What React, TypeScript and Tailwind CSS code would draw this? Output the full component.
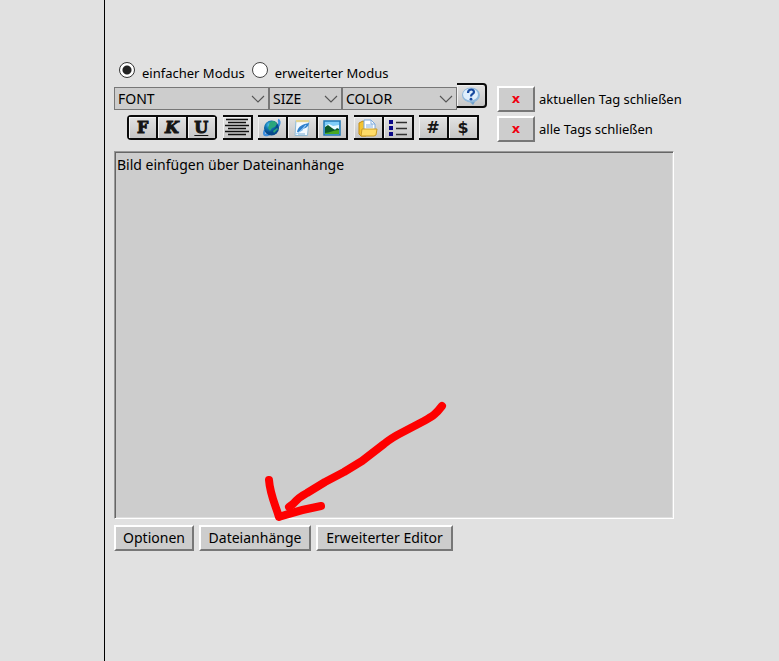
import type { ReactNode } from "react";

const FONT = "font-['Noto_Sans',sans-serif]";

function TagSelect({ label, className }: { label: string; className: string }) {
  return (
    <div className={`relative ${className}`}>
      <select
        aria-label={label}
        className="block h-[23px] w-full appearance-none border border-[#777] bg-[#cdcdcd] pl-[3px] text-sm leading-5 text-black"
      >
        <option>{label}</option>
      </select>
      <svg
        viewBox="0 0 14 8"
        className="pointer-events-none absolute top-2 right-1 h-2 w-3.5"
        fill="none"
        stroke="#555"
        strokeWidth="1.1"
      >
        <path d="M1 1l6 6 6-6" />
      </svg>
    </div>
  );
}

function IconGroup({ children, className = "" }: { children: ReactNode; className?: string }) {
  return <div className={`flex h-[25px] border-y-2 border-[#0a0a0a] ${className}`}>{children}</div>;
}

function IconButton({ title, children, className = "" }: { title: string; children: ReactNode; className?: string }) {
  return (
    <button
      type="button"
      title={title}
      aria-label={title}
      className={`flex w-[30px] items-center justify-center border-r-2 border-[#0a0a0a] bg-linear-to-b from-[#e2e2e2] to-[#c6c6c6] leading-5 font-bold text-[#151515] inset-shadow-[1px_1px_0_#f2f2f2] ${className}`}
    >
      {children}
    </button>
  );
}

function CloseTag({ label }: { label: string }) {
  return (
    <label className="flex h-[26px] items-center gap-1 text-[13px] leading-5">
      <button
        type="button"
        className="h-[26px] w-[38px] border-2 border-t-white border-r-[#777] border-b-[#777] border-l-white bg-[#cdcdcd] font-['DejaVu_Sans',sans-serif] text-[13px] leading-5 font-bold text-[#f00010]"
      >
        x
      </button>
      <span>{label}</span>
    </label>
  );
}

function FooterButton({ label, className }: { label: string; className: string }) {
  return (
    <button
      type="button"
      className={`h-[26px] border-2 border-t-white border-r-[#777] border-b-[#777] border-l-white bg-[#cdcdcd] text-sm leading-5 whitespace-nowrap ${className}`}
    >
      {label}
    </button>
  );
}

function HelpIcon() {
  return (
    <svg viewBox="0 0 20 20" className="h-5 w-5">
      <path d="M7 14h8l-3 5z" fill="#6d9fca" />
      <ellipse cx="10" cy="9" rx="9" ry="7.5" fill="#8fb8dc" />
      <ellipse cx="9.5" cy="8.5" rx="7.5" ry="6" fill="#e0effc" />
      <path d="M7 7c0-4.5 6-4.5 6-1 0 2-3 2-3 4.5" fill="none" stroke="#174aa0" strokeWidth="2.2" />
      <circle cx="10" cy="13.2" r="1.4" fill="#174aa0" />
    </svg>
  );
}

function AlignIcon() {
  return (
    <svg viewBox="0 0 24 19" className="h-[19px] w-6" stroke="#111" strokeWidth="1.5">
      <path d="M1 1.5h22M3 4.5h18M0 7.5h24M3 10.5h18M0 13.5h24M3 16.5h18" />
    </svg>
  );
}

function GlobeIcon() {
  return (
    <svg viewBox="0 0 20 20" className="h-5 w-5">
      <defs>
        <radialGradient id="globe" cx="35%" cy="30%">
          <stop offset="0" stopColor="#58c8ee" />
          <stop offset="0.5" stopColor="#147ab8" />
          <stop offset="1" stopColor="#064a8c" />
        </radialGradient>
      </defs>
      <path d="M3 12c-3 7 2 6 8 2s8-11 5-12" fill="none" stroke="#3d8fe0" strokeWidth="2.4" />
      <circle cx="9.5" cy="10" r="7.5" fill="url(#globe)" />
      <path d="M8 4c3-2 6-1 7 2l-2 3-3 1-2 3-2-3zM11 13l4-3 1 1-4 4z" fill="#2aa67c" />
    </svg>
  );
}

function EditIcon() {
  return (
    <svg viewBox="0 0 20 20" className="h-5 w-5">
      <path d="M4 2.5h13l-1.5 15H3z" fill="#f4faff" stroke="#8ebad5" />
      <path d="M4 2h13v2.2H4z" fill="#e3d492" />
      <path d="M5 14c1-6 6-8 12-9-1 5-4 5-6 6 0 1-2 3-6 3z" fill="#2f80cc" />
      <path d="M4 16c3-1 6-4 10-9" fill="none" stroke="#9fd0f6" strokeWidth="1.2" />
      <path d="M6 16h7" stroke="#75a8d2" />
    </svg>
  );
}

function ImageIcon() {
  return (
    <svg viewBox="0 0 18 16" className="h-4 w-[18px]">
      <path d="M1 1h16v14H1z" fill="#7fcdf8" stroke="#2379b5" strokeWidth="1.5" />
      <path d="M2 6l4-2 4 2 6-1v4H2z" fill="#e8faff" />
      <path d="M2 7l3-2 4 3 3 2 2-2 2 1v5H2z" fill="#0c5a28" />
      <path d="M2 13c5 0 8-3 14-3v4H2z" fill="#49a824" />
    </svg>
  );
}

function FolderIcon() {
  return (
    <svg viewBox="0 0 20 20" className="h-5 w-5">
      <path d="M1 5l4-2 3 2v13H3l-2-2z" fill="#f4c331" stroke="#c48d13" />
      <path d="M6 2h7l4 4v7H6z" fill="#fff" stroke="#79a7db" />
      <path d="M13 2v4h4M8 7h7M8 9h7" fill="none" stroke="#83afe0" />
      <path d="M4 11h15l-1 6-2 1H3z" fill="#ffdc67" stroke="#c99b25" />
    </svg>
  );
}

function ListIcon() {
  return (
    <svg viewBox="0 0 18 18" className="h-[18px] w-[18px]">
      <path d="M0 1h4v4H0zM0 7h4v4H0zM0 13h4v4H0z" fill="#090787" />
      <path d="M7 3.5h11M7 9.5h11M7 15.5h11" stroke="#303030" strokeWidth="1.4" />
    </svg>
  );
}

function Arrow() {
  return (
    <svg
      viewBox="0 0 190 130"
      className="pointer-events-none absolute top-[245px] left-[146px] h-[130px] w-[190px]"
      fill="none"
      stroke="#fe0000"
      strokeWidth="8"
      strokeLinecap="round"
      strokeLinejoin="round"
    >
      <path d="M182 10C176 18 173 20 164 25L143 36C135 40 130 43 124 48L102 65L84 76L65 86L47 97C41 100 38 102 33 108L29 111" />
      <path d="M9 84C10 98 15 108 19 121C31 117 39 114 61 110" />
    </svg>
  );
}

export default function App() {
  return (
    <div className={`flex min-h-screen bg-[#e1e1e1] text-black ${FONT}`}>
      <aside className="w-[105px] shrink-0 border-r border-black" />
      <main className="min-w-0 flex-1 pt-14 pr-[105px] pl-[9px]">
        <div className="flex h-[27px] items-center pl-[5px] text-[13px] leading-5">
          <input type="radio" name="mode" id="simple" defaultChecked className="h-4 w-4 appearance-none rounded-full border border-[#333] bg-white checked:bg-[radial-gradient(circle,#222_4px,transparent_5px)]" />
          <label htmlFor="simple" className="mt-1.5 ml-[7px] whitespace-nowrap">einfacher Modus</label>
          <input type="radio" name="mode" id="extended" className="ml-[7px] h-4 w-4 appearance-none rounded-full border border-[#444] bg-white checked:bg-[radial-gradient(circle,#222_4px,transparent_5px)]" />
          <label htmlFor="extended" className="mt-1.5 ml-[7px] whitespace-nowrap">erweiterter Modus</label>
        </div>

        <div className="flex">
          <div className="w-[383px] shrink-0">
            <div className="flex h-[27px] items-end">
              <TagSelect label="FONT" className="w-[155px]" />
              <TagSelect label="SIZE" className="w-[73px]" />
              <TagSelect label="COLOR" className="w-[115px]" />
              <IconButton title="Hilfe" className="h-[25px] self-start rounded-r-sm border-y-2">
                <HelpIcon />
              </IconButton>
            </div>

            <div className="mt-[5px] flex pl-[13px] font-['DejaVu_Serif',serif] text-base">
              <IconGroup className="w-[90px] rounded-sm border-l-2">
                <IconButton title="Fett" className="[-webkit-text-stroke:1px_#151515]">F</IconButton>
                <IconButton title="Kursiv" className="italic [-webkit-text-stroke:1px_#151515]">K</IconButton>
                <IconButton title="Unterstrichen" className="w-7 underline underline-offset-2 [-webkit-text-stroke:1px_#151515]">U</IconButton>
              </IconGroup>
              <IconGroup className="ml-1.5">
                <IconButton title="Zentriert"><AlignIcon /></IconButton>
              </IconGroup>
              <IconGroup className="ml-[5px]">
                <IconButton title="Link"><GlobeIcon /></IconButton>
                <IconButton title="Bearbeiten"><EditIcon /></IconButton>
                <IconButton title="Bild"><ImageIcon /></IconButton>
              </IconGroup>
              <IconGroup className="ml-1.5">
                <IconButton title="Zitat"><FolderIcon /></IconButton>
                <IconButton title="Liste"><ListIcon /></IconButton>
              </IconGroup>
              <IconGroup className="ml-[5px] font-['DejaVu_Sans',sans-serif]">
                <IconButton title="Code">#</IconButton>
                <IconButton title="Variable">$</IconButton>
              </IconGroup>
            </div>
          </div>

          <div className="flex flex-col gap-1 pt-[3px] whitespace-nowrap">
            <CloseTag label="aktuellen Tag schließen" />
            <CloseTag label="alle Tags schließen" />
          </div>
        </div>

        <div className="relative mt-[9px]">
          <textarea
            aria-label="Nachricht"
            defaultValue="Bild einfügen über Dateinanhänge"
            className="block h-[368px] w-full resize-none border border-t-[#999] border-r-white border-b-white border-l-[#999] bg-[#cdcdcd] px-0.5 py-px text-sm leading-6 inset-shadow-[1px_1px_0_#666,-1px_-1px_0_#dedede]"
          />
          <Arrow />
        </div>

        <div className="mt-1.5 flex gap-[5px]">
          <FooterButton label="Optionen" className="w-20" />
          <FooterButton label="Dateianhänge" className="w-28" />
          <FooterButton label="Erweiterter Editor" className="w-[137px]" />
        </div>
      </main>
    </div>
  );
}
